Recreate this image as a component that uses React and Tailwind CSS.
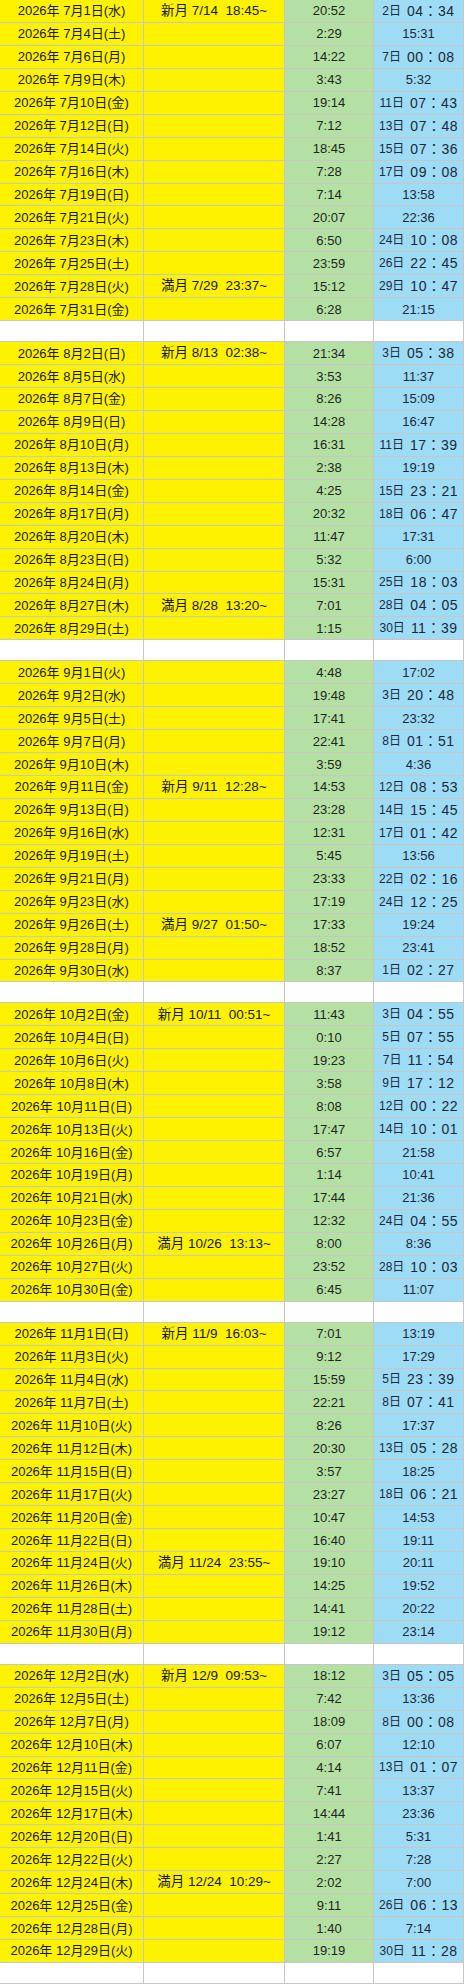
import React from "react";

// 列: 日付 / 月齢イベント / 緑の時刻 / 青の時刻
const months = [
  [
    ["2026年 7月1日(水)", "新月 7/14  18:45~", "20:52", "2日", "04：34"],
    ["2026年 7月4日(土)", "", "2:29", "", "15:31"],
    ["2026年 7月6日(月)", "", "14:22", "7日", "00：08"],
    ["2026年 7月9日(木)", "", "3:43", "", "5:32"],
    ["2026年 7月10日(金)", "", "19:14", "11日", "07：43"],
    ["2026年 7月12日(日)", "", "7:12", "13日", "07：48"],
    ["2026年 7月14日(火)", "", "18:45", "15日", "07：36"],
    ["2026年 7月16日(木)", "", "7:28", "17日", "09：08"],
    ["2026年 7月19日(日)", "", "7:14", "", "13:58"],
    ["2026年 7月21日(火)", "", "20:07", "", "22:36"],
    ["2026年 7月23日(木)", "", "6:50", "24日", "10：08"],
    ["2026年 7月25日(土)", "", "23:59", "26日", "22：45"],
    ["2026年 7月28日(火)", "満月 7/29  23:37~", "15:12", "29日", "10：47"],
    ["2026年 7月31日(金)", "", "6:28", "", "21:15"],
  ],
  [
    ["2026年 8月2日(日)", "新月 8/13  02:38~", "21:34", "3日", "05：38"],
    ["2026年 8月5日(水)", "", "3:53", "", "11:37"],
    ["2026年 8月7日(金)", "", "8:26", "", "15:09"],
    ["2026年 8月9日(日)", "", "14:28", "", "16:47"],
    ["2026年 8月10日(月)", "", "16:31", "11日", "17：39"],
    ["2026年 8月13日(木)", "", "2:38", "", "19:19"],
    ["2026年 8月14日(金)", "", "4:25", "15日", "23：21"],
    ["2026年 8月17日(月)", "", "20:32", "18日", "06：47"],
    ["2026年 8月20日(木)", "", "11:47", "", "17:31"],
    ["2026年 8月23日(日)", "", "5:32", "", "6:00"],
    ["2026年 8月24日(月)", "", "15:31", "25日", "18：03"],
    ["2026年 8月27日(木)", "満月 8/28  13:20~", "7:01", "28日", "04：05"],
    ["2026年 8月29日(土)", "", "1:15", "30日", "11：39"],
  ],
  [
    ["2026年 9月1日(火)", "", "4:48", "", "17:02"],
    ["2026年 9月2日(水)", "", "19:48", "3日", "20：48"],
    ["2026年 9月5日(土)", "", "17:41", "", "23:32"],
    ["2026年 9月7日(月)", "", "22:41", "8日", "01：51"],
    ["2026年 9月10日(木)", "", "3:59", "", "4:36"],
    ["2026年 9月11日(金)", "新月 9/11  12:28~", "14:53", "12日", "08：53"],
    ["2026年 9月13日(日)", "", "23:28", "14日", "15：45"],
    ["2026年 9月16日(水)", "", "12:31", "17日", "01：42"],
    ["2026年 9月19日(土)", "", "5:45", "", "13:56"],
    ["2026年 9月21日(月)", "", "23:33", "22日", "02：16"],
    ["2026年 9月23日(水)", "", "17:19", "24日", "12：25"],
    ["2026年 9月26日(土)", "満月 9/27  01:50~", "17:33", "", "19:24"],
    ["2026年 9月28日(月)", "", "18:52", "", "23:41"],
    ["2026年 9月30日(水)", "", "8:37", "1日", "02：27"],
  ],
  [
    ["2026年 10月2日(金)", "新月 10/11  00:51~", "11:43", "3日", "04：55"],
    ["2026年 10月4日(日)", "", "0:10", "5日", "07：55"],
    ["2026年 10月6日(火)", "", "19:23", "7日", "11：54"],
    ["2026年 10月8日(木)", "", "3:58", "9日", "17：12"],
    ["2026年 10月11日(日)", "", "8:08", "12日", "00：22"],
    ["2026年 10月13日(火)", "", "17:47", "14日", "10：01"],
    ["2026年 10月16日(金)", "", "6:57", "", "21:58"],
    ["2026年 10月19日(月)", "", "1:14", "", "10:41"],
    ["2026年 10月21日(水)", "", "17:44", "", "21:36"],
    ["2026年 10月23日(金)", "", "12:32", "24日", "04：55"],
    ["2026年 10月26日(月)", "満月 10/26  13:13~", "8:00", "", "8:36"],
    ["2026年 10月27日(火)", "", "23:52", "28日", "10：03"],
    ["2026年 10月30日(金)", "", "6:45", "", "11:07"],
  ],
  [
    ["2026年 11月1日(日)", "新月 11/9  16:03~", "7:01", "", "13:19"],
    ["2026年 11月3日(火)", "", "9:12", "", "17:29"],
    ["2026年 11月4日(水)", "", "15:59", "5日", "23：39"],
    ["2026年 11月7日(土)", "", "22:21", "8日", "07：41"],
    ["2026年 11月10日(火)", "", "8:26", "", "17:37"],
    ["2026年 11月12日(木)", "", "20:30", "13日", "05：28"],
    ["2026年 11月15日(日)", "", "3:57", "", "18:25"],
    ["2026年 11月17日(火)", "", "23:27", "18日", "06：21"],
    ["2026年 11月20日(金)", "", "10:47", "", "14:53"],
    ["2026年 11月22日(日)", "", "16:40", "", "19:11"],
    ["2026年 11月24日(火)", "満月 11/24  23:55~", "19:10", "", "20:11"],
    ["2026年 11月26日(木)", "", "14:25", "", "19:52"],
    ["2026年 11月28日(土)", "", "14:41", "", "20:22"],
    ["2026年 11月30日(月)", "", "19:12", "", "23:14"],
  ],
  [
    ["2026年 12月2日(水)", "新月 12/9  09:53~", "18:12", "3日", "05：05"],
    ["2026年 12月5日(土)", "", "7:42", "", "13:36"],
    ["2026年 12月7日(月)", "", "18:09", "8日", "00：08"],
    ["2026年 12月10日(木)", "", "6:07", "", "12:10"],
    ["2026年 12月11日(金)", "", "4:14", "13日", "01：07"],
    ["2026年 12月15日(火)", "", "7:41", "", "13:37"],
    ["2026年 12月17日(木)", "", "14:44", "", "23:36"],
    ["2026年 12月20日(日)", "", "1:41", "", "5:31"],
    ["2026年 12月22日(火)", "", "2:27", "", "7:28"],
    ["2026年 12月24日(木)", "満月 12/24  10:29~", "2:02", "", "7:00"],
    ["2026年 12月25日(金)", "", "9:11", "26日", "06：13"],
    ["2026年 12月28日(月)", "", "1:40", "", "7:14"],
    ["2026年 12月29日(火)", "", "19:19", "30日", "11：28"],
  ],
];

const cell = "flex items-center justify-center border-r border-b border-[#c6c6c6] overflow-hidden whitespace-pre";

const Row = ({ row }) => {
  const [date, moon, rise, day, time] = row;
  return (
    <div className="grid grid-cols-[144px_141px_89px_90px] h-[22.95px]">
      <div className={`${cell} bg-[#fff200] text-[13px] text-[#1a1a1a]`}>{date}</div>
      <div className={`${cell} bg-[#fff200] text-[13.5px] text-[#1a1a1a]`}>{moon}</div>
      <div className={`${cell} bg-[#b5e0a4] text-[13px] text-[#1c261c]`}>{rise}</div>
      <div className={`${cell} bg-[#9edbf4] text-[13px] text-[#1a2940]`}>
        {day ? (
          <>
            <span className="text-[12px]">{day}</span>
            <span className="ml-[6px] tracking-[0.5px] text-[14px]">{time}</span>
          </>
        ) : (
          time
        )}
      </div>
    </div>
  );
};

const Blank = () => (
  <div className="grid grid-cols-[144px_141px_89px_90px] h-[21px] bg-white">
    <div className={cell}></div>
    <div className={cell}></div>
    <div className={cell}></div>
    <div className={cell}></div>
  </div>
);

export default function App() {
  return (
    <div className="w-[464px] bg-white font-['Liberation_Sans','Noto_Sans_CJK_JP',sans-serif] leading-none">
      {months.map((rows, i) => (
        <div key={i}>
          {rows.map((r) => (
            <Row key={r[0]} row={r} />
          ))}
          <Blank />
        </div>
      ))}
    </div>
  );
}
